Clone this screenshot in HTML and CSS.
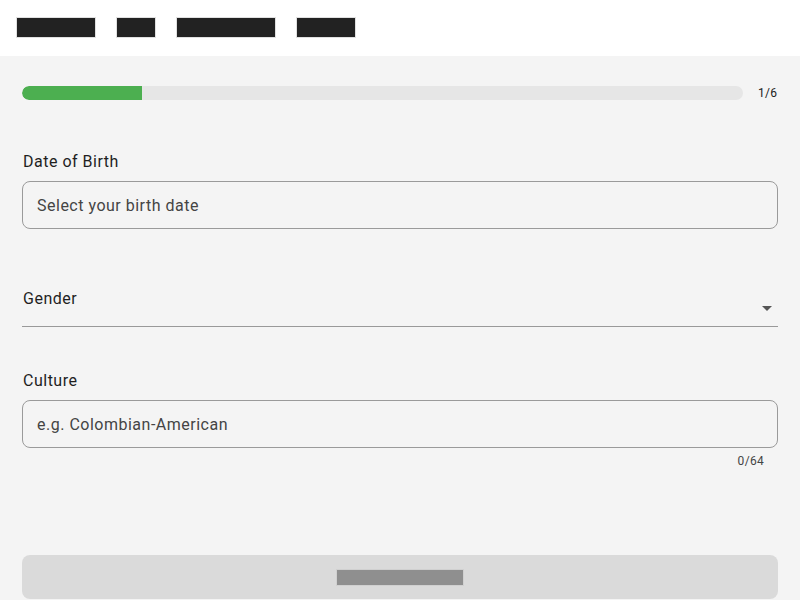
FILE: index.html
```html
<!DOCTYPE html>
<html>
<head>
<meta charset="utf-8">
<link rel="stylesheet" href="styles.css">
</head>
<body>
<header class="topbar">
  <span class="redact w80"></span>
  <span class="redact w40"></span>
  <span class="redact w100"></span>
  <span class="redact w60"></span>
</header>
<main class="page">
  <div class="progress-row">
    <div class="track"><div class="fill" style="width:16.67%"></div></div>
    <span class="step">1/6</span>
  </div>
  <div class="field first">
    <label class="label">Date of Birth</label>
    <div class="box"><span class="placeholder">Select your birth date</span></div>
  </div>
  <div class="field select">
    <label class="label">Gender</label>
    <svg class="arrow" width="10" height="5" viewBox="0 0 10 5"><path d="M0 0h10L5 5z" fill="#555"/></svg>
  </div>
  <div class="field culture">
    <label class="label">Culture</label>
    <div class="box"><span class="placeholder">e.g. Colombian-American</span></div>
    <div class="counter">0/64</div>
  </div>
  <div class="button"><span class="redact-btn"></span></div>
</main>
</body>
</html>
```
FILE: styles.css
```css
* { box-sizing: border-box; }
html, body { margin: 0; padding: 0; }
body {
  background: #f4f4f4;
  font-family: Roboto, "Noto Sans", sans-serif;
  color: #222;
  width: 800px;
  height: 600px;
  overflow: hidden;
}
.topbar {
  background: #fff;
  height: 56px;
  display: flex;
  align-items: flex-start;
  gap: 20px;
  padding: 17px 16px 0;
}
.redact {
  display: block;
  height: 21px;
  background: #222;
  outline: 1px solid #e0e0e0;
  outline-offset: -1px;
}
.w80 { width: 80px; }
.w40 { width: 40px; }
.w100 { width: 100px; }
.w60 { width: 60px; }
.page {
  padding: 30px 22px 0 22px;
}
.progress-row {
  display: flex;
  align-items: center;
  gap: 15px;
  height: 14px;
}
.track {
  width: 721px;
  height: 14px;
  background: #e6e6e6;
  border-radius: 7px;
  overflow: hidden;
}
.fill {
  height: 100%;
  background: #4caf50;
  border-radius: 7px 0 0 7px;
}
.step {
  font-size: 12px;
  color: #222;
  line-height: 14px;
  letter-spacing: 0.3px;
}
.field.first { margin-top: 51px; }
.label {
  display: block;
  font-size: 16px;
  line-height: 22px;
  color: #1f1f1f;
  letter-spacing: 0.5px;
  padding-left: 1px;
}
.box {
  margin-top: 8px;
  height: 48px;
  border: 1px solid #9a9a9a;
  border-radius: 8px;
  display: flex;
  align-items: center;
  padding-left: 14px;
}
.placeholder {
  font-size: 16px;
  color: #444;
  letter-spacing: 0.5px;
}
.field.select {
  margin-top: 59px;
  position: relative;
  height: 39px;
  border-bottom: 1px solid #999;
}
.arrow {
  position: absolute;
  right: 6px;
  top: 18px;
}
.field.culture { margin-top: 43px; }
.counter {
  text-align: right;
  font-size: 12px;
  color: #444;
  line-height: 14px;
  margin-top: 6px;
  padding-right: 14px;
  letter-spacing: 0.3px;
}
.button {
  margin-top: 87px;
  height: 44px;
  background: #dadada;
  border-radius: 8px;
  display: flex;
  align-items: center;
  justify-content: center;
}
.redact-btn {
  display: block;
  width: 128px;
  height: 17px;
  background: #8f8f8f;
  outline: 1px solid #d0d0d0;
  outline-offset: -1px;
}
```
